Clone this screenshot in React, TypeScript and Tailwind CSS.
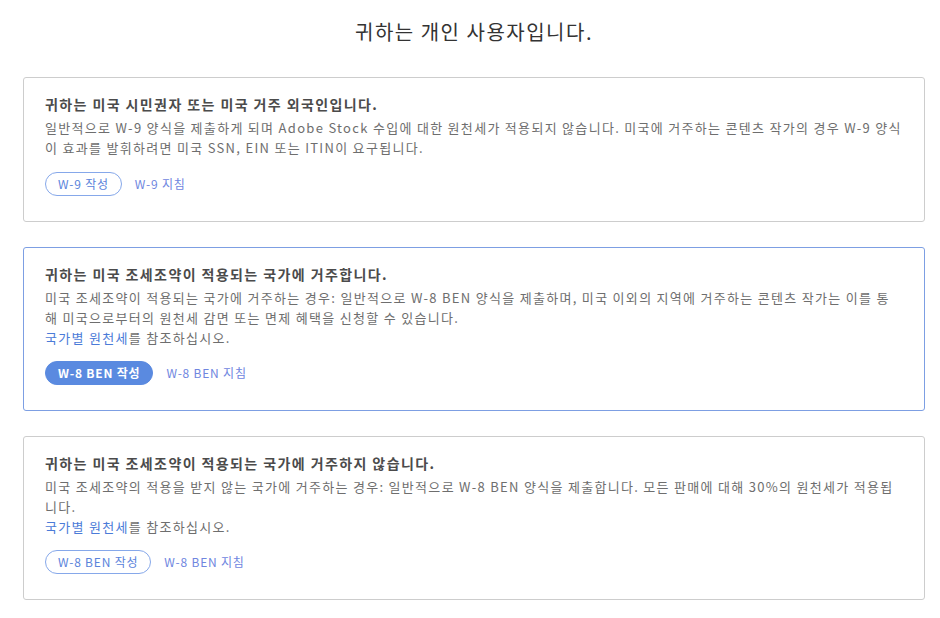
import React from 'react';

type Option = {
    heading: string;
    lines: string[];
    seeTax?: boolean;
    form: string;
    active?: boolean;
};

const options: Option[] = [
    {
        heading: '귀하는 미국 시민권자 또는 미국 거주 외국인입니다.',
        lines: [
            '일반적으로 W-9 양식을 제출하게 되며 Adobe Stock 수입에 대한 원천세가 적용되지 않습니다. 미국에 거주하는 콘텐츠 작가의 경우 W-9 양식',
            '이 효과를 발휘하려면 미국 SSN, EIN 또는 ITIN이 요구됩니다.',
        ],
        form: 'W-9',
    },
    {
        heading: '귀하는 미국 조세조약이 적용되는 국가에 거주합니다.',
        lines: [
            '미국 조세조약이 적용되는 국가에 거주하는 경우: 일반적으로 W-8 BEN 양식을 제출하며, 미국 이외의 지역에 거주하는 콘텐츠 작가는 이를 통',
            '해 미국으로부터의 원천세 감면 또는 면제 혜택을 신청할 수 있습니다.',
        ],
        seeTax: true,
        form: 'W-8 BEN',
        active: true,
    },
    {
        heading: '귀하는 미국 조세조약이 적용되는 국가에 거주하지 않습니다.',
        lines: [
            '미국 조세조약의 적용을 받지 않는 국가에 거주하는 경우: 일반적으로 W-8 BEN 양식을 제출합니다. 모든 판매에 대해 30%의 원천세가 적용됩',
            '니다.',
        ],
        seeTax: true,
        form: 'W-8 BEN',
    },
];

export default function App() {
    return (
        <div
            className="min-h-[618px] w-[940px] bg-white pl-[23px] pr-[15px] pt-[19px]"
            style={{ fontFamily: '"Noto Sans CJK KR", "Noto Sans", sans-serif' }}
        >
            <h1 className="text-center text-[20px] leading-[26px] tracking-[1.5px] text-[#333333]">귀하는 개인 사용자입니다.</h1>

            <div className="mt-[32px] flex flex-col gap-[25px]">
                {options.map((o, i) => (
                    <div
                        key={i}
                        className={`rounded-[3px] border bg-white px-[21px] pt-[16px] pb-[25px] ${
                            o.active ? 'border-[#7d9fe3]' : 'border-[#cdcdcd]'
                        }`}
                    >
                        <h2 className="text-[14px] font-bold leading-[20px] tracking-[1.4px] text-[#4b4b4b]">{o.heading}</h2>
                        <div className="mt-[4px] text-[13px] leading-[20px] tracking-[1.3px] text-[#6e6e6e]">
                            {o.lines.map((l, j) => (
                                <div key={j} className="whitespace-nowrap">{l}</div>
                            ))}
                            {o.seeTax && (
                                <div className="leading-[19px]">
                                    <a className="text-[#4b7bd8]">국가별 원천세</a>를 참조하십시오.
                                </div>
                            )}
                        </div>
                        <div className="mt-[14px] flex items-center gap-[13px]">
                            <button
                                className={`h-[24px] rounded-full border px-[12px] text-[12px] leading-none tracking-[0.8px] ${
                                    o.active
                                        ? 'border-[#5a8ae0] bg-[#5a8ae0] font-semibold text-white'
                                        : 'border-[#86a8ea] bg-white text-[#5a83db]'
                                }`}
                            >
                                {o.form} 작성
                            </button>
                            <a className="text-[12px] tracking-[0.8px] text-[#6f86e0]">{o.form} 지침</a>
                        </div>
                    </div>
                ))}
            </div>
        </div>
    );
}
